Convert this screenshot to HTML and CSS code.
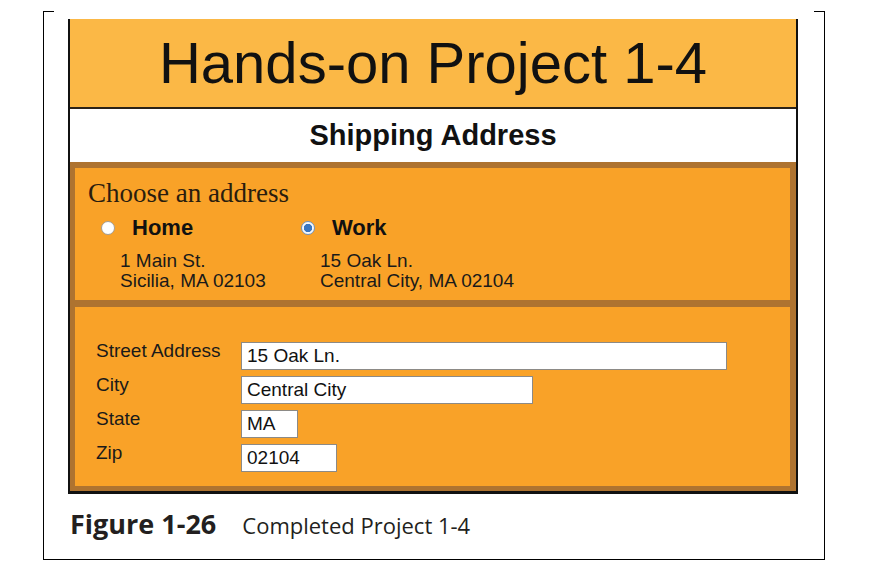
FILE: index.html
```html
<!DOCTYPE html>
<html lang="en">
<head>
<meta charset="utf-8">
<title>Hands-on Project 1-4</title>
<link rel="stylesheet" href="styles.css">
</head>
<body>
<div class="page">
  <div class="figure">
    <header class="banner"><h1>Hands-on Project 1-4</h1></header>
    <div class="subhead"><h2>Shipping Address</h2></div>
    <div class="panel">
      <section class="choose">
        <div class="choose-title">Choose an address</div>
        <div class="options">
          <div class="option">
            <div class="opt-row"><span class="radio"></span><span class="opt-label">Home</span></div>
            <div class="addr">1 Main St.<br>Sicilia, MA 02103</div>
          </div>
          <div class="option">
            <div class="opt-row"><span class="radio checked"></span><span class="opt-label">Work</span></div>
            <div class="addr">15 Oak Ln.<br>Central City, MA 02104</div>
          </div>
        </div>
      </section>
      <section class="fields">
        <label class="lbl">Street Address</label>
        <div class="field w-street">15 Oak Ln.</div>
        <label class="lbl">City</label>
        <div class="field w-city">Central City</div>
        <label class="lbl">State</label>
        <div class="field w-state">MA</div>
        <label class="lbl">Zip</label>
        <div class="field w-zip">02104</div>
      </section>
    </div>
  </div>
  <div class="caption"><span class="fig-num">Figure 1-26</span><span class="fig-text">Completed Project 1-4</span></div>
</div>
</body>
</html>
```
FILE: styles.css
```css
* { box-sizing: border-box; }
html, body { margin: 0; padding: 0; background: #fff; }
body { font-family: "Liberation Sans", Arial, sans-serif; color: #111; }

.page {
  position: relative;
  margin: 11px 0 0 43px;
  width: 782px;
  height: 549px;
  border-left: 1px solid #000;
  border-right: 1px solid #000;
  border-bottom: 1px solid #000;
  padding-top: 8px;
}
.page::before, .page::after {
  content: "";
  position: absolute;
  top: 0;
  width: 11px;
  height: 1px;
  background: #000;
}
.page::before { left: -1px; }
.page::after { right: -1px; }

.figure {
  margin-left: 24px;
  width: 730px;
  border: 2px solid #111;
  border-top: none;
  border-bottom-width: 3px;
}

.banner {
  background: #fbb846;
  height: 90px;
  border-bottom: 2px solid #2a2218;
}
.banner h1 {
  margin: 0;
  font-weight: normal;
  font-size: 58px;
  line-height: 88px;
  text-align: center;
  color: #111;
}

.subhead { background: #fff; height: 53px; }
.subhead h2 {
  margin: 0;
  font-size: 29px;
  font-weight: bold;
  line-height: 53px;
  text-align: center;
  color: #111;
}

.panel {
  background: #ae7330;
  padding: 6px 6px 5px 5px;
  display: flex;
  flex-direction: column;
  gap: 7px;
}

.choose {
  background: #f9a228;
  height: 132px;
  padding: 10px 0 0 13px;
}
.choose-title {
  font-family: "Liberation Serif", "Times New Roman", serif;
  font-size: 27px;
  line-height: 30px;
  color: #2a1d0e;
}
.options {
  display: flex;
  margin-top: 7px;
  padding-left: 13px;
}
.option { width: 200px; flex: none; white-space: nowrap; }
.opt-row {
  display: flex;
  align-items: center;
  height: 26px;
}
.radio {
  width: 14px;
  height: 14px;
  border-radius: 50%;
  background: #fff;
  border: 1px solid #a39c92;
  margin-right: 17px;
  flex: none;
}
.radio.checked {
  border-color: #6f93c0;
  background: radial-gradient(circle, #3a76c0 0 3.8px, #f4f7fb 4.5px);
}
.opt-label {
  font-size: 22px;
  font-weight: bold;
  line-height: 26px;
  color: #111;
}
.addr {
  margin-top: 10px;
  padding-left: 19px;
  font-size: 19px;
  line-height: 20px;
  color: #1a1a1a;
}

.fields {
  background: #f9a228;
  height: 179px;
  padding: 35px 0 0 21px;
  display: grid;
  grid-template-columns: 145px auto;
  grid-auto-rows: 28px;
  row-gap: 6px;
  justify-items: start;
  align-content: start;
}
.lbl {
  font-size: 19px;
  line-height: 16px;
  color: #1a1a1a;
  padding-top: 1px;
}
.field {
  height: 28px;
  background: #fff;
  border: 1px solid #8c8a86;
  padding-left: 5px;
  font-size: 19px;
  line-height: 26px;
  color: #111;
  white-space: nowrap;
}
.w-street { width: 486px; }
.w-city { width: 292px; }
.w-state { width: 57px; }
.w-zip { width: 96px; }

.caption {
  margin: 13px 0 0 26px;
  display: flex;
  align-items: baseline;
  gap: 26px;
  font-family: "Open Sans", "Noto Sans", sans-serif;
  color: #231f20;
  line-height: 34px;
}
.fig-num { font-weight: bold; font-size: 27px; }
.fig-text { font-size: 22px; }
```
